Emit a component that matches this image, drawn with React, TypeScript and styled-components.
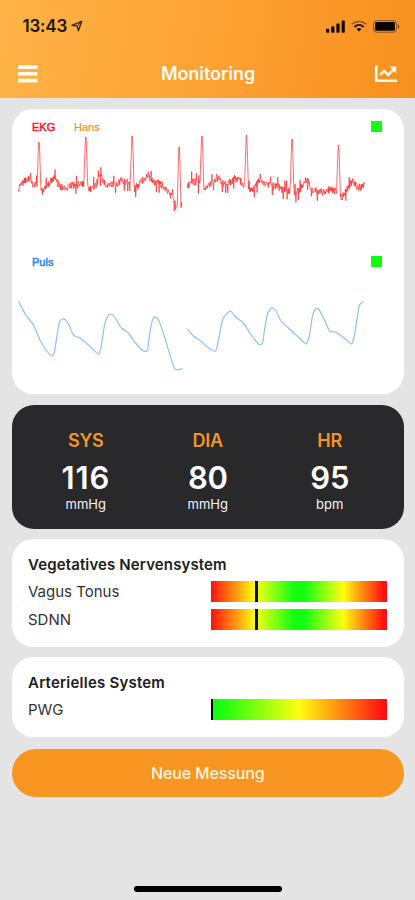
import React from "react";
import styled, { createGlobalStyle } from "styled-components";

type Point = [number, number];

const GlobalStyle = createGlobalStyle`
  * { box-sizing: border-box; }
  body { margin: 0; background: #e4e4e4; font-family: Inter, Roboto, sans-serif; }
`;

const Screen = styled.div`
  width: 415px;
  height: 900px;
  display: flex;
  flex-direction: column;
  background: #e4e4e4;
  overflow: hidden;
`;

const Header = styled.header`
  height: 98px;
  flex: none;
  display: flex;
  flex-direction: column;
  background: linear-gradient(100deg, #ffb347 0%, #fda436 45%, #f7901e 100%);
`;

const StatusBar = styled.div`
  height: 50px;
  padding: 2px 15px 0 22.5px;
  display: flex;
  align-items: center;
  justify-content: space-between;
`;

const Clock = styled.div`
  display: flex;
  align-items: center;
  gap: 4px;
  font-size: 17px;
  font-weight: 600;
  letter-spacing: -0.2px;
  color: #1d1305;
`;

const StatusIcons = styled.div`
  display: flex;
  align-items: center;
  gap: 6px;
`;

const NavBar = styled.div`
  height: 48px;
  padding: 0 17px 0 18px;
  display: grid;
  grid-template-columns: 24px 1fr 24px;
  align-items: center;
`;

const Title = styled.h1`
  margin: 0;
  text-align: center;
  font-size: 18px;
  font-weight: 600;
  letter-spacing: -0.05px;
  line-height: 22px;
  padding-bottom: 1px;
  color: #fffaf0;
`;

const IconButton = styled.button`
  display: flex;
  padding: 0;
  border: 0;
  background: none;
`;

const Content = styled.main`
  flex: 1;
  display: flex;
  flex-direction: column;
  padding: 11px 11px 0 11.5px;
`;

const Card = styled.section`
  background: #fff;
  border-radius: 21px;
`;

const SignalCard = styled(Card)`
  height: 285px;
  padding: 11px 0 0;
  margin-bottom: 11px;
`;

const Signal = styled.div<{ $height: number }>`
  height: ${(p) => p.$height}px;
`;

const SignalHeader = styled.div`
  height: 14px;
  padding: 0 22.5px 0 20.5px;
  display: flex;
  align-items: center;
`;

const SignalName = styled.span<{ $color: string; $bold?: boolean }>`
  width: 42px;
  font-family: "Liberation Sans", Arial, sans-serif;
  font-size: 11px;
  line-height: 14px;
  color: ${(p) => p.$color};
  -webkit-text-stroke: ${(p) => (p.$bold ? 0.5 : 0.2)}px ${(p) => p.$color};
`;

const SignalState = styled.span`
  width: 11px;
  height: 11px;
  margin: -2px 0 0 auto;
  background: #12fb14;
`;

const Trace = styled.svg`
  display: block;
`;

const VitalsCard = styled.section`
  height: 124px;
  margin-bottom: 10px;
  padding: 25px 12px 0;
  border-radius: 22px;
  background: #29292b;
  display: grid;
  grid-template-columns: repeat(3, 122px);
  justify-content: center;
`;

const Vital = styled.div`
  display: flex;
  flex-direction: column;
  align-items: center;
`;

const VitalName = styled.span`
  font-size: 18px;
  line-height: 22px;
  font-weight: 600;
  letter-spacing: -0.2px;
  color: #f39522;
`;

const VitalValue = styled.span<{ $spacing: number }>`
  margin-top: 8px;
  font-size: 31px;
  line-height: 36px;
  font-weight: 600;
  letter-spacing: ${(p) => p.$spacing}px;
  color: #fff;
`;

const VitalUnit = styled.span`
  font-size: 13px;
  line-height: 16px;
  color: #f4f4f4;
`;

const SystemCard = styled(Card)<{ $height: number; $gap: number }>`
  height: ${(p) => p.$height}px;
  margin-bottom: ${(p) => p.$gap}px;
  padding: 14px 17px 0 16.5px;
`;

const SystemTitle = styled.h2<{ $spacing: number }>`
  margin: 0;
  font-size: 15px;
  line-height: 24px;
  padding-bottom: 1px;
  font-weight: 600;
  letter-spacing: ${(p) => p.$spacing}px;
  color: #202020;
`;

const MeasureRow = styled.div`
  height: 27.5px;
  display: flex;
  align-items: center;
  justify-content: space-between;
  font-size: 15px;
  color: #333;
`;

const Scale = styled.div<{ $kind: "centered" | "rising" }>`
  width: 176px;
  height: 21px;
  display: flex;
  background: ${(p) =>
    p.$kind === "centered"
      ? "linear-gradient(90deg, #ff1010 0%, #ffff10 25%, #12ff12 47%, #12ff12 53%, #ffff10 75%, #ff1010 98%)"
      : "linear-gradient(90deg, #12ff12 0%, #12ff12 4%, #ffff10 50%, #ff1010 98%)"};
`;

const Marker = styled.span<{ $offset: number; $width: number }>`
  width: ${(p) => p.$width}px;
  height: 21px;
  margin-left: ${(p) => p.$offset}px;
  background: #090909;
`;

const PrimaryButton = styled.button`
  height: 48px;
  flex: none;
  padding: 0;
  border: 0;
  border-radius: 24px;
  background: #f89621;
  color: #fff1de;
  font-family: inherit;
  font-size: 16px;
  font-weight: 500;
  letter-spacing: -0.15px;
`;

const HomeIndicator = styled.div`
  width: 148px;
  height: 6px;
  margin: auto auto 8px;
  border-radius: 3px;
  background: #000;
`;

const ekgRuns: { base: Point[]; peaks: Point[] }[] = [
  {
    base: [[18, 191], [22, 182], [28, 180], [33, 184], [38, 185], [41, 192], [45, 188], [50, 182], [54, 178], [60, 187], [66, 187], [75, 185], [84, 183], [88, 190], [95, 185], [100, 176], [106, 187], [113, 185], [120, 181], [130, 182], [134, 189], [138, 185], [143, 180], [147, 174], [152, 182], [160, 184], [165, 187], [169, 194], [173, 200], [176, 208], [180, 203], [182, 207]],
    peaks: [[38.5, 142], [85.3, 137], [131.7, 136], [178.6, 147]],
  },
  {
    base: [[187, 186], [192, 180], [199, 185], [205, 190], [210, 185], [216, 177], [222, 183], [228, 184], [235, 178], [243, 184], [250, 191], [255, 187], [260, 177], [264, 183], [270, 186], [277, 186], [282, 190], [288, 190], [294, 194], [300, 189], [306, 179], [313, 191], [320, 192], [328, 190], [335, 191], [340, 198], [345, 192], [352, 181], [357, 188], [364, 185]],
    peaks: [[201.4, 136], [246, 135], [291.6, 139], [338, 145]],
  },
];

const pulseRuns: Point[][] = [
  [[18, 301], [21, 307], [26, 316], [33, 325], [40, 341], [47, 352], [52, 356], [54, 351], [57, 333], [59, 322], [62, 319], [65, 320], [69, 326], [73, 335], [81, 339], [90, 347], [98, 354], [101, 345], [104, 325], [107, 317], [110, 314], [114, 317], [121, 328], [128, 333], [135, 343], [143, 351], [147, 350], [149, 335], [152, 320], [155, 317], [159, 322], [165, 340], [174, 368.5], [182, 368.5]],
  [[187, 329], [193, 336], [200, 341], [207, 347], [215, 351], [218, 340], [222, 320], [226, 314], [230, 311], [235, 317], [243, 323], [250, 334], [258, 344], [262, 343], [264, 330], [267, 314], [271, 308], [275, 310], [280, 320], [288, 328], [300, 339], [306, 344], [309, 335], [312, 316], [315, 309], [318, 309], [324, 320], [329, 331], [335, 332], [345, 339], [351, 344], [354, 335], [357, 316], [359, 305], [363, 301.5]],
];

const valueAt = (points: Point[], x: number): number => {
  for (let i = 1; i < points.length; i++) {
    if (x <= points[i][0]) {
      const [x0, y0] = points[i - 1];
      const [x1, y1] = points[i];
      return y0 + ((x - x0) / (x1 - x0)) * (y1 - y0);
    }
  }
  return points[points.length - 1][1];
};

const jitter = (n: number): number => {
  const s = Math.sin(n * 127.1 + 31.7) * 43758.5453;
  return (s - Math.floor(s)) * 2 - 1;
};

const ekgPath = ({ base, peaks }: { base: Point[]; peaks: Point[] }): string => {
  const start = base[0][0];
  const end = base[base.length - 1][0];
  let path = "";
  for (let x = start, i = 0; x <= end; x += 0.42, i++) {
    const near = peaks.find((p) => Math.abs(p[0] - x) < 1.9);
    let y: number;
    if (near) {
      const k = Math.max(0, 1 - Math.abs(near[0] - x) / 1.9);
      const foot = valueAt(base, x);
      y = foot + (near[1] - foot) * Math.min(1, k * 1.25);
    } else {
      const n = jitter(i + start);
      y = valueAt(base, x) + n * (Math.abs(n) > 0.93 ? 9.5 : 4.3);
    }
    path += `${i ? "L" : "M"}${x.toFixed(1)} ${y.toFixed(1)}`;
  }
  return path;
};

/* Catmull-Rom spline with a low tension, so that troughs stay pointed. */
const pulsePath = (points: Point[]): string => {
  let path = `M${points[0].join(" ")}`;
  for (let i = 0; i < points.length - 1; i++) {
    const [ax, ay] = points[Math.max(0, i - 1)];
    const [bx, by] = points[i];
    const [cx, cy] = points[i + 1];
    const [dx, dy] = points[Math.min(points.length - 1, i + 2)];
    const t = 0.11;
    path += `C${bx + (cx - ax) * t} ${by + (cy - ay) * t} ${cx - (dx - bx) * t} ${cy - (dy - by) * t} ${cx} ${cy}`;
  }
  return path;
};

const vitals = [
  { name: "SYS", value: 116, unit: "mmHg", spacing: 0.9 },
  { name: "DIA", value: 80, unit: "mmHg", spacing: -0.3 },
  { name: "HR", value: 95, unit: "bpm", spacing: -0.2 },
];

const LocationIcon = () => (
  <svg width="12" height="12" viewBox="0 0 12 12" fill="none" stroke="#3b270c" strokeWidth="1.4" strokeLinejoin="round">
    <path d="M10.6 1.4 1 5.3 6.2 6.1 7.4 10.8Z" />
    <path d="M10.6 1.4 6.2 6.1" strokeWidth="1" />
  </svg>
);

const CellularIcon = () => (
  <svg width="19" height="13" viewBox="0 0 19 13" fill="#110b03">
    <rect x="0" y="8.7" width="3.2" height="4" rx=".8" />
    <rect x="5.2" y="6.3" width="3.2" height="6.4" rx=".8" />
    <rect x="10.4" y="3.5" width="3.2" height="9.2" rx=".8" />
    <rect x="15.6" y=".5" width="3.2" height="12.2" rx=".8" />
  </svg>
);

const WifiIcon = () => (
  <svg width="16" height="12" viewBox="0 0 16 12" fill="none" stroke="#241605">
    <path d="M.8 4.3C4.9.4 11.1.4 15.2 4.3" strokeWidth="1.3" opacity=".55" />
    <path d="M3.4 6.9c2.7-2.5 6.5-2.5 9.2 0" strokeWidth="2" />
    <path d="M5.6 9C7 7.7 9 7.7 10.4 9L8 11.4Z" fill="#110b03" stroke="none" />
  </svg>
);

const BatteryIcon = () => (
  <svg width="27" height="13" viewBox="0 0 27 13">
    <rect x=".6" y=".6" width="22.8" height="11.6" rx="3" fill="none" stroke="#8a5417" strokeWidth="1" />
    <rect x="2.1" y="2.1" width="19.8" height="8.6" rx="1.2" fill="#080500" />
    <path d="M24.8 4c1.9.8 1.9 4 0 4.8Z" fill="#7d4b13" />
  </svg>
);

const MenuIcon = () => (
  <svg width="20" height="18" viewBox="0 0 20 18" fill="#fffaf0">
    <path d="M0 .3h19.5v3.6H0zM0 7h19.5v3.6H0zM0 13.8h19.5v3.6H0z" />
  </svg>
);

const ChartIcon = () => (
  <svg width="24" height="18" viewBox="0 0 24 18" fill="none" stroke="#fffaf0">
    <path d="M2.2.6v15.1h21" strokeWidth="2.6" strokeLinejoin="round" />
    <path d="m6.2 9.9 4-4 4 4 5.4-5.3" strokeWidth="2.5" />
    <path d="M15.3 1.4h6.9v6.9Z" fill="#fffaf0" stroke="none" />
  </svg>
);

export default function App() {
  return (
    <>
      <GlobalStyle />
      <Screen>
        <Header>
          <StatusBar>
            <Clock>
              13:43
              <LocationIcon />
            </Clock>
            <StatusIcons>
              <CellularIcon />
              <WifiIcon />
              <BatteryIcon />
            </StatusIcons>
          </StatusBar>
          <NavBar>
            <IconButton aria-label="Menü"><MenuIcon /></IconButton>
            <Title>Monitoring</Title>
            <IconButton aria-label="Verlauf"><ChartIcon /></IconButton>
          </NavBar>
        </Header>
        <Content>
          <SignalCard>
            <Signal $height={135}>
              <SignalHeader>
                <SignalName $color="#f51b2b" $bold>EKG</SignalName>
                <SignalName $color="#ee9326">Hans</SignalName>
                <SignalState />
              </SignalHeader>
              <Trace width="392" height="96" viewBox="11.5 134 392 96" fill="none" stroke="#ff1a1a" strokeWidth="0.65" strokeLinejoin="round">
                {ekgRuns.map((run, i) => <path key={i} d={ekgPath(run)} />)}
              </Trace>
            </Signal>
            <Signal $height={139}>
              <SignalHeader>
                <SignalName $color="#2388f5" $bold>Puls</SignalName>
                <SignalState />
              </SignalHeader>
              <Trace width="392" height="110" viewBox="11.5 269 392 110" fill="none" stroke="#8fc0fa" strokeWidth="1.2" strokeLinejoin="round">
                {pulseRuns.map((run, i) => <path key={i} d={pulsePath(run)} />)}
              </Trace>
            </Signal>
          </SignalCard>
          <VitalsCard>
            {vitals.map((v) => (
              <Vital key={v.name}>
                <VitalName>{v.name}</VitalName>
                <VitalValue $spacing={v.spacing}>{v.value}</VitalValue>
                <VitalUnit>{v.unit}</VitalUnit>
              </Vital>
            ))}
          </VitalsCard>
          <SystemCard $height={108} $gap={9.5}>
            <SystemTitle $spacing={0.13}>Vegetatives Nervensystem</SystemTitle>
            <MeasureRow>
              Vagus Tonus
              <Scale $kind="centered"><Marker $offset={43.5} $width={3} /></Scale>
            </MeasureRow>
            <MeasureRow>
              SDNN
              <Scale $kind="centered"><Marker $offset={43.5} $width={3} /></Scale>
            </MeasureRow>
          </SystemCard>
          <SystemCard $height={80.5} $gap={11.5}>
            <SystemTitle $spacing={0.22}>Arterielles System</SystemTitle>
            <MeasureRow>
              PWG
              <Scale $kind="rising"><Marker $offset={0} $width={2} /></Scale>
            </MeasureRow>
          </SystemCard>
          <PrimaryButton>Neue Messung</PrimaryButton>
          <HomeIndicator />
        </Content>
      </Screen>
    </>
  );
}
